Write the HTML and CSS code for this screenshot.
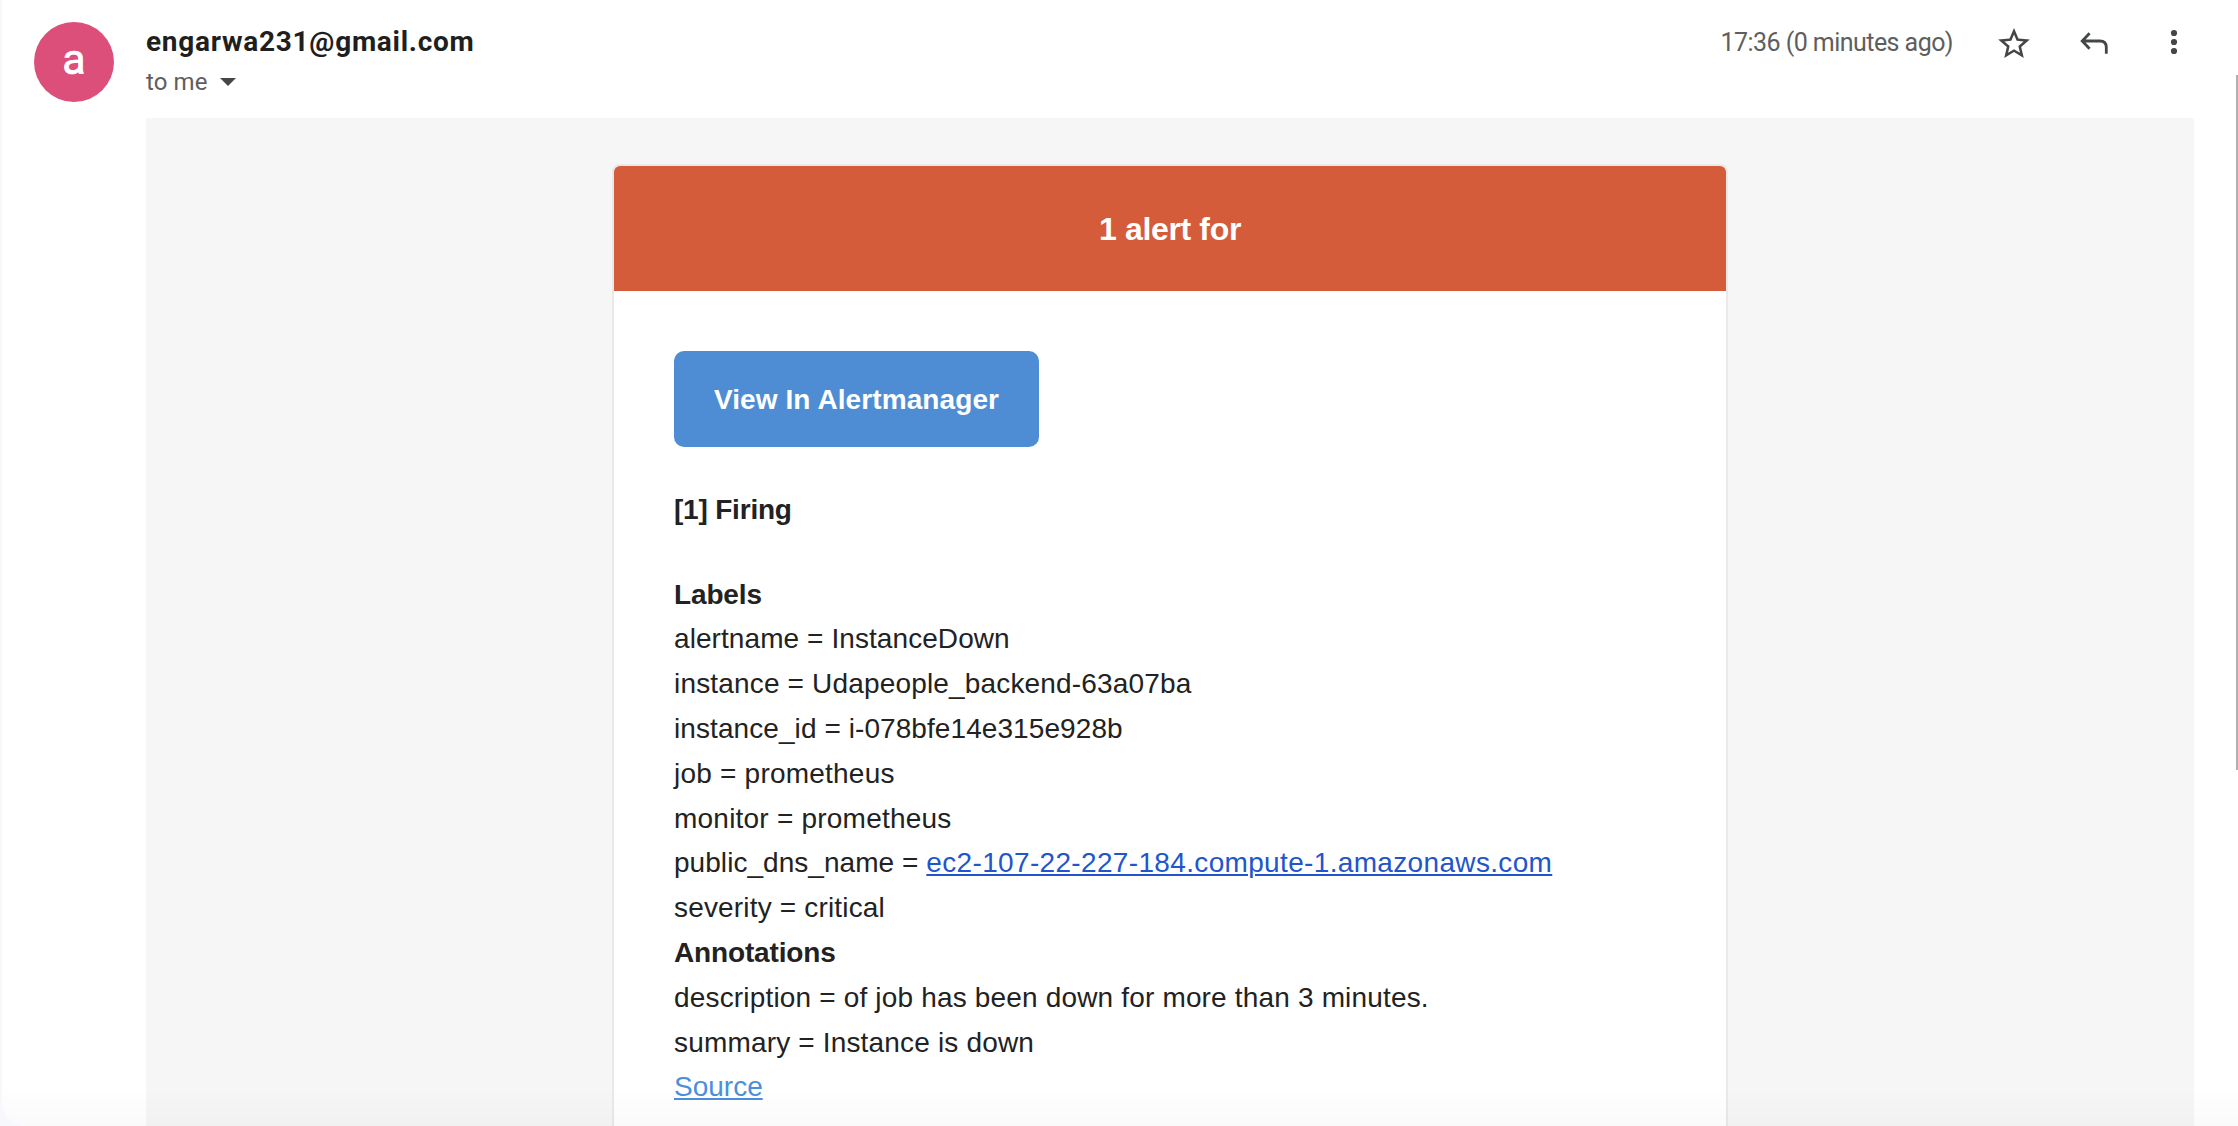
FILE: index.html
```html
<!DOCTYPE html>
<html lang="en">
<head>
<meta charset="utf-8">
<title>Alert email</title>
<link rel="stylesheet" href="styles.css">
</head>
<body>
<main class="message">
  <header class="message-header">
    <div class="avatar">a</div>
    <div class="sender">
      <div class="sender-email">engarwa231@gmail.com</div>
      <div class="recipient"><span>to me</span><svg class="caret" viewBox="0 0 16 8"><path d="M0 0h16L8 8z"/></svg></div>
    </div>
    <div class="actions">
      <span class="time">17:36 (0 minutes ago)</span>
      <svg class="icon-star" viewBox="2 2 20 19"><path d="M22 9.24l-7.19-.62L12 2 9.19 8.63 2 9.24l5.46 4.73L5.82 21 12 17.27 18.18 21l-1.63-7.03L22 9.24zM12 15.4l-3.76 2.27 1-4.28-3.32-2.88 4.38-.38L12 6.1l1.71 4.04 4.38.38-3.32 2.88 1 4.28L12 15.4z"/></svg>
      <svg class="icon-reply" viewBox="0 0 28 22"><path d="M9.6 1.2L2.2 9l7.4 7.8M2.4 9H20q6.3 0 6.3 6.3v6.4"/></svg>
      <svg class="icon-more" viewBox="0 0 8 26"><circle cx="4" cy="4" r="3.1"/><circle cx="4" cy="13" r="3.1"/><circle cx="4" cy="22" r="3.1"/></svg>
    </div>
  </header>
  <section class="email-body">
    <article class="card">
      <h1 class="card-title">1 alert for</h1>
      <div class="card-content">
        <a class="button">View In Alertmanager</a>
        <p class="firing">[1] Firing</p>
        <div class="details">
          <div class="heading">Labels</div>
          <div class="snug">alertname = InstanceDown</div>
          <div>instance = Udapeople_backend-63a07ba</div>
          <div class="snug">instance_id = i-078bfe14e315e928b</div>
          <div class="loose">job = prometheus</div>
          <div class="loose">monitor = prometheus</div>
          <div><span class="key">public_dns_name = </span><a class="host">ec2-107-22-227-184.compute-1.amazonaws.com</a></div>
          <div>severity = critical</div>
          <div class="heading">Annotations</div>
          <div>description = of job has been down for more than 3 minutes.</div>
          <div>summary = Instance is down</div>
          <div><a class="source">Source</a></div>
        </div>
      </div>
    </article>
  </section>
</main>
<div class="scrollbar"></div>
</body>
</html>
```
FILE: styles.css
```css
* { box-sizing: border-box; }

body {
  margin: 0;
  height: 1126px;
  overflow: hidden;
  position: relative;
  background: #f6f8fc;
  font-family: "Liberation Sans", Arial, sans-serif;
  color: #222;
}

.message {
  display: flex;
  flex-direction: column;
  height: 1126px;
  margin-left: 2px;
  padding: 0 44px 0 32px;
  background: #fff;
  border-bottom-left-radius: 24px;
  overflow: hidden;
  position: relative;
}

.message::after {
  content: "";
  position: absolute;
  inset: auto 0 0 0;
  height: 40px;
  background: linear-gradient(rgba(0, 0, 0, 0), rgba(0, 0, 0, 0.018));
}

.message-header {
  display: flex;
  flex: none;
  height: 118px;
  padding-top: 22px;
  font-family: Roboto, sans-serif;
}

.avatar {
  display: flex;
  align-items: center;
  justify-content: center;
  width: 80px;
  height: 80px;
  padding-bottom: 7px;
  border-radius: 50%;
  background: #db4f7a;
  color: #fff;
  font-size: 43px;
  font-weight: 400;
  -webkit-text-stroke: 0.7px #fff;
}

.sender { margin-left: 32px; }

.sender-email {
  font-size: 28px;
  font-weight: 700;
  line-height: 40px;
  letter-spacing: 0.73px;
  color: #1f1f1f;
}

.recipient {
  display: flex;
  align-items: center;
  gap: 12px;
  font-size: 24px;
  line-height: 40px;
  letter-spacing: 0.1px;
  color: #5e5e5e;
}

.caret { width: 16px; height: 8px; fill: #444746; }

.actions {
  display: flex;
  align-items: center;
  height: 40px;
  margin-left: auto;
}

.time {
  margin-right: 45px;
  font-size: 25px;
  letter-spacing: -0.55px;
  color: #5e5e5e;
}

.icon-star { width: 32px; height: 30px; margin: 2px 50px 0 0; fill: #444746; }
.icon-reply { width: 28px; height: 22px; margin: 1px 62px 0 0; fill: none; stroke: #444746; stroke-width: 2.8; }
.icon-more { width: 8px; height: 26px; margin-right: 16px; fill: #444746; }

.email-body {
  display: flex;
  justify-content: center;
  flex: 1;
  min-height: 0;
  margin-left: 112px;
  padding-top: 46px;
  background: #f6f6f6;
}

.card {
  width: 1116px;
  border: 2px solid #e9e9e9;
  border-bottom: 0;
  border-radius: 8px 8px 0 0;
  background: #fff;
  overflow: hidden;
}

.card-title {
  margin: 0;
  height: 125px;
  background: #d55c3a;
  color: #fff;
  font-size: 32px;
  font-weight: 700;
  line-height: 127px;
  letter-spacing: -0.35px;
  text-align: center;
}

.card-content { padding: 60px 60px 0; }

.button {
  display: flex;
  align-items: center;
  justify-content: center;
  width: 365px;
  height: 96px;
  padding-top: 1px;
  border-radius: 10px;
  background: #4e8dd4;
  color: #fff;
  font-size: 28px;
  font-weight: 700;
  letter-spacing: 0.1px;
}

.firing {
  margin: 40px 0;
  font-size: 28px;
  font-weight: 700;
  line-height: 45px;
  letter-spacing: -0.2px;
}

.details {
  padding-top: 0.6px;
  font-size: 28px;
  line-height: 44.8px;
  letter-spacing: 0.17px;
  white-space: nowrap;
}

.heading { font-weight: 700; letter-spacing: -0.15px; }
.snug { letter-spacing: 0.08px; }
.loose { letter-spacing: 0.22px; }
.key { letter-spacing: 0.05px; }

.host,
.source {
  text-decoration: underline;
  text-decoration-thickness: 2px;
  text-underline-offset: 2px;
}

.host { color: #2255cc; letter-spacing: 0.34px; }
.source { color: #4a8fdc; letter-spacing: 0; }

.scrollbar {
  position: absolute;
  top: 75px;
  right: 0;
  width: 2px;
  height: 695px;
  background: #b0b0b0;
}
```
